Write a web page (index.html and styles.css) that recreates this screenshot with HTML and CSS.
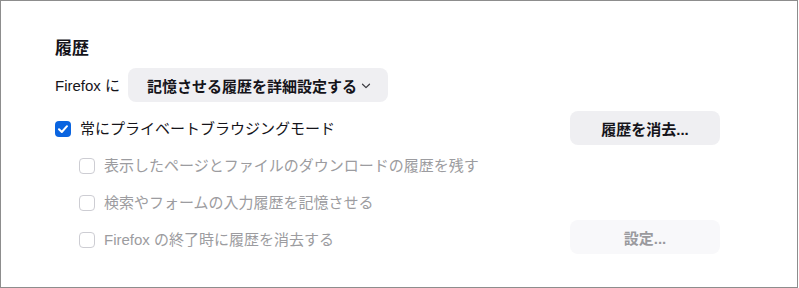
FILE: index.html
```html
<!DOCTYPE html>
<html lang="ja">
<head>
<meta charset="utf-8">
<link rel="stylesheet" href="styles.css">
</head>
<body>
<div class="frame">
  <section class="pane">
    <h2 class="title">履歴</h2>
    <div class="mode-row">
      <span class="mode-label">Firefox に</span>
      <button class="btn dropdown">記憶させる履歴を詳細設定する<svg class="chev" width="10" height="6" viewBox="0 0 10 6"><path d="M1.5 1.2 L5 4.6 L8.5 1.2" fill="none" stroke="#3a3a40" stroke-width="1.2" stroke-linecap="round" stroke-linejoin="round"/></svg></button>
    </div>
    <div class="rows">
      <div class="row">
        <label class="check">
          <span class="box checked"><svg width="16" height="16" viewBox="0 0 16 16"><path d="M4 8.3 L6.8 11 L12 5.2" fill="none" stroke="#fff" stroke-width="2" stroke-linecap="round" stroke-linejoin="round"/></svg></span>
          <span class="text">常にプライベートブラウジングモード</span>
        </label>
        <button class="btn action">履歴を消去...</button>
      </div>
      <div class="row sub">
        <label class="check disabled">
          <span class="box"></span>
          <span class="text">表示したページとファイルのダウンロードの履歴を残す</span>
        </label>
      </div>
      <div class="row sub">
        <label class="check disabled">
          <span class="box"></span>
          <span class="text">検索やフォームの入力履歴を記憶させる</span>
        </label>
      </div>
      <div class="row sub">
        <label class="check disabled">
          <span class="box"></span>
          <span class="text">Firefox の終了時に履歴を消去する</span>
        </label>
        <button class="btn action off">設定...</button>
      </div>
    </div>
  </section>
</div>
</body>
</html>
```
FILE: styles.css
```css
* { box-sizing: border-box; }
html, body { margin: 0; padding: 0; background: #fff; }
body {
  font-family: "Liberation Sans", "Noto Sans CJK JP", sans-serif;
  font-size: 15px;
  color: #15141a;
}
.frame {
  width: 798px;
  height: 288px;
  border: 1px solid #8d8d8d;
  background: #fff;
}
.pane {
  width: 665px;
  margin-left: 54px;
  padding-top: 36px;
}
.title {
  margin: 0;
  font-size: 17px;
  line-height: 24px;
  font-weight: 700;
}
.mode-row {
  display: flex;
  align-items: center;
  margin-top: 7px;
  gap: 8px;
}
.mode-label { line-height: 20px; padding-top: 1px; }
.btn {
  font: inherit;
  font-weight: 700;
  color: #15141a;
  border: none;
  background: #efeff2;
  border-radius: 8px;
  height: 34px;
  padding: 0;
}
.dropdown {
  width: 260px;
  display: flex;
  align-items: center;
  justify-content: center;
  gap: 4px;
  padding-left: 2px;
}
.chev { margin-top: 2px; }
.rows {
  display: flex;
  flex-direction: column;
  gap: 3px;
  margin-top: 9px;
}
.row {
  display: flex;
  align-items: center;
  justify-content: space-between;
  height: 34px;
}
.row.sub { padding-left: 24px; }
.check {
  display: flex;
  align-items: center;
  gap: 9px;
  padding-top: 2px;
}
.box {
  width: 16px;
  height: 16px;
  border-radius: 4px;
  border: 1px solid #cdcdd3;
  background: #fff;
  display: block;
}
.box.checked {
  border: none;
  background: #0a64e0;
}
.box svg { display: block; }
.text { line-height: 20px; }
.disabled .text { color: #9c9ca0; }
.action {
  width: 150px;
}
.action.off {
  background: #f8f8fa;
  color: #9a9a9e;
  margin-top: -4px;
}
```
